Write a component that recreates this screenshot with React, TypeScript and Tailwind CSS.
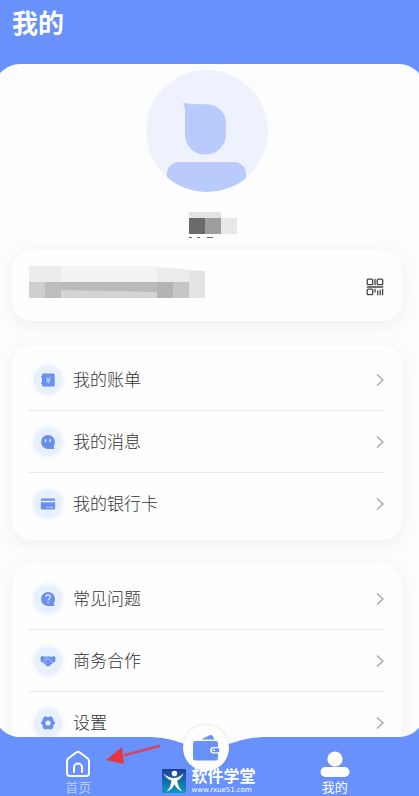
import React from 'react';

type IconProps = { className?: string };

const BillIcon: React.FC<IconProps> = ({ className }) => (
  <svg viewBox="0 0 16 16" className={className} fill="none">
    <path d="M4 1.5h9.500a1.200 1.200 0 0 1 1.200 1.200v10.600a1.200 1.200 0 0 1-1.200 1.200H3.200A1.200 1.200 0 0 1 2 13.300V12h-.8v-1.600H2V5.600h-.8V4H2V2.700a1.200 1.200 0 0 1 1.200-1.200Z" fill="#6990ee" />
    <path d="m6.300 4.800 2 2.700 2-2.700M6 7.700h4.600M6 9.400h4.600M8.300 7.500v4" stroke="#bdd2ff" strokeWidth="1" />
  </svg>
);

const MessageIcon: React.FC<IconProps> = ({ className }) => (
  <svg viewBox="0 0 16 16" className={className} fill="none">
    <path d="M8 1a7 7 0 0 1 7 7c0 1.700-.5 3-1.300 4.200l.6 2.800H8A7 7 0 0 1 8 1Z" fill="#6990ee" />
    <path d="M5.500 5.800v1.700M10.200 5.800v1.700" stroke="#dbe6ff" strokeWidth="1.500" strokeLinecap="round" />
    <path d="M5.500 10.300c1.400 1.200 3.500 1.200 5 0" stroke="#5580e4" strokeWidth="1" />
  </svg>
);

const CardIcon: React.FC<IconProps> = ({ className }) => (
  <svg viewBox="0 0 16 16" className={className} fill="none">
    <path d="M2 2.500h12c.7 0 1.200.5 1.200 1.200v1H.8v-1c0-.7.500-1.200 1.200-1.200ZM.8 6.300h14.400v6c0 .7-.5 1.200-1.200 1.200H2c-.7 0-1.200-.5-1.200-1.200v-6Z" fill="#6990ee" />
    <path d="M6.500 11.300h2M9.500 11.300h3.500" stroke="#c9d9ff" strokeWidth="1" />
  </svg>
);

const QuestionIcon: React.FC<IconProps> = ({ className }) => (
  <svg viewBox="0 0 16 16" className={className} fill="none">
    <path d="M8 1a7 7 0 0 1 7 7c0 1.700-.5 3-1.300 4.200l.9 2.800H8A7 7 0 0 1 8 1Z" fill="#6990ee" />
    <path d="M5.900 6c.1-1.300 1-2 2.200-2s2.200.8 2.200 2c0 1.600-2.200 1.700-2.200 3.500M8.100 10.800v1.400" stroke="#dbe6ff" strokeWidth="1.300" />
  </svg>
);

const HandshakeIcon: React.FC<IconProps> = ({ className }) => (
  <svg viewBox="0 0 16 16" className={className} fill="none">
    <path d="m.4 4.200 2.400-1.400 1.600 1.100 2.800-.7.900.4 1-.4 2.600.7 1.500-1.100 2.400 1.400-.4 4.600-1.800.6-3.800 3.400c-.9.800-2 .8-2.900.1L2.600 9.300.8 8.700.4 4.200Z" fill="#6990ee" />
    <path d="M8.200 3.600 5.400 6.200c.9.900 2.300.7 3.200-.3l4.500 3.600M3 8.500l1.600-1.300M4.600 10l1.500-1.400M6.300 11.300l1.200-1.100" stroke="#c9d9ff" strokeWidth=".8" />
  </svg>
);

const GearIcon: React.FC<IconProps> = ({ className }) => (
  <svg viewBox="0 0 16 16" className={className} fill="none">
    <path d="M5.400 1.800 8 2.700l2.600-.9 1.900 1.100.5 2.700L14.800 8 13 10.300l-.5 2.800-1.900 1.100-2.600-.9-2.600.9-1.900-1.100-.5-2.800L1.200 8 3 5.600l.5-2.700 1.900-1.100Z" fill="#6990ee" stroke="#6990ee" strokeWidth="1" strokeLinejoin="round" />
    <circle cx="8" cy="8" r="2.600" fill="#e4edff" />
  </svg>
);

const Chevron = () => (
  <svg viewBox="0 0 8 14" className="h-3.5 w-2" fill="none" stroke="#a3a3a3" strokeWidth="1.300">
    <path d="m1 1.500 6 5.500-6 5.500" />
  </svg>
);

const QrIcon = () => (
  <svg viewBox="0 0 18 18" className="size-[18px]" fill="none" stroke="#444" strokeWidth="1.300">
    <rect x="1.200" y="1.200" width="5.500" height="5.500" rx="1" />
    <rect x="11.200" y="1.200" width="5.500" height="5.500" rx="1" />
    <rect x="1.200" y="11.200" width="5.500" height="5.500" rx="1" />
    <path d="M9 .8v6.400M.8 9h16.400M9 10.800v3.800M11.700 12.500v4.700M14.200 11.700v5.500M16.600 10.800v6.400" />
  </svg>
);

const Avatar = () => (
  <svg viewBox="0 0 122 122" className="size-[122px]">
    <defs>
      <clipPath id="avatar-clip">
        <circle cx="61" cy="61" r="61" />
      </clipPath>
    </defs>
    <circle cx="61" cy="61" r="61" fill="#edf2fd" />
    <g clipPath="url(#avatar-clip)" fill="#b9cbfc">
      <path d="M37 32.500c5 1.500 12 1.700 21 1.700 14 0 22 7 22 20V64c0 12-9 20.500-20.500 20.500S39 76 39 64V42c0-4-.6-7-2-9.500Z" />
      <rect x="21" y="92" width="79" height="40" rx="12" />
    </g>
  </svg>
);

const MaskedName = () => (
  <svg viewBox="0 0 48 28" className="h-7 w-12" shapeRendering="crispEdges">
    <path fill="#e3e3e3" d="M0 0h32v6H0z" />
    <path fill="#6a6a6a" d="M0 6h16v16H0z" />
    <path fill="#9d9d9d" d="M16 6h16v16H16z" />
    <path fill="#e8e8e8" d="M32 6h16v16H32z" />
    <path fill="#666" d="M0 25h3v1H0zM8 25h3v1H8zM18 25h6v1h-6z" />
  </svg>
);

const MaskedNumber = () => (
  <svg viewBox="0 0 176 32" className="h-8 w-44">
    <path fill="#f3f3f3" d="M0 0h128v16H0z" />
    <path fill="#ececec" d="M0 0h32v16H0zM128 1l48 4v11h-48z" />
    <path fill="#e4e4e4" d="M160 5h16v27h-16z" />
    <path fill="#cfcfcf" d="M0 16h16v16H0z" />
    <path fill="#d4d4d4" d="M32 16h96v16H32z" />
    <path fill="#bababa" d="M32 16h96v10l-96-2z" />
    <path fill="#bdbdbd" d="M16 16h16v16H16z" />
    <path fill="#b4b4b4" d="M128 16h16v16h-16z" />
    <path fill="#c6c6c6" d="M144 16h16v16h-16z" />
  </svg>
);

const groups = [
  [
    { label: '我的账单', icon: BillIcon },
    { label: '我的消息', icon: MessageIcon },
    { label: '我的银行卡', icon: CardIcon },
  ],
  [
    { label: '常见问题', icon: QuestionIcon },
    { label: '商务合作', icon: HandshakeIcon },
    { label: '设置', icon: GearIcon },
  ],
];

const MenuCard: React.FC<{ items: (typeof groups)[number] }> = ({ items }) => (
  <ul className="divide-y divide-[#e9e9e9] rounded-[20px] bg-[#fefefe] pt-1 pr-[18px] pb-1.5 pl-[17px] shadow-[0_4px_14px_4px_rgba(0,0,0,0.04)]">
    {items.map(({ label, icon: Icon }) => (
      <li key={label}>
        <a href="#" className="flex h-[61px] items-center pl-[5px]">
          <span className="flex size-7 items-center justify-center rounded-full bg-[#e8f0fe] shadow-[0_0_4px_2px_#eef4fe]">
            <Icon className="size-4" />
          </span>
          <span className="ml-[11px] flex-1 pb-0.5 text-[17px] leading-6 font-light text-[#333]">{label}</span>
          <Chevron />
        </a>
      </li>
    ))}
  </ul>
);

const TabBar = () => (
  <nav className="relative grid h-[59px] shrink-0 grid-cols-3 pr-5 pl-3.5 text-[13px] leading-4 text-white">
    {/* Curved cradle under the wallet button */}
    <svg viewBox="0 0 120 20" className="absolute top-0 left-1/2 -ml-[63px] h-5 w-[120px]" fill="#fdfdfd">
      <path d="M0 0C20 0 28 4 38 7c4 8 40 8 44 0C92 4 100 0 120 0Z" />
    </svg>
    <a href="#" className="flex flex-col items-center pt-3 text-[#b7caff]">
      <svg viewBox="0 0 28 30" className="h-[30px] w-7" fill="none" stroke="#fff" strokeWidth="2" strokeLinejoin="round" strokeLinecap="round">
        <path d="M12.200 3.500a3 3 0 0 1 3.600 0l8 6a3 3 0 0 1 1.200 2.400V24a3 3 0 0 1-3 3H6a3 3 0 0 1-3-3V11.900a3 3 0 0 1 1.200-2.400l8-6Z" />
        <path d="M10 23v-4.500a4 4 0 0 1 8 0V23" />
      </svg>
      首页
    </a>
    <a href="#" aria-label="钱包" className="relative -mt-3 flex size-[46px] items-center justify-center justify-self-center rounded-full bg-[#fefefe] shadow-[0_0_3px_rgba(80,100,160,0.25)]">
      <svg viewBox="0 0 28 28" className="size-7" fill="#6891fb">
        <path d="M9 5.600 17.500 1.200c1.300-.6 2.600-.3 3.200.9L22.500 5.600Z" />
        <path d="M3.500 7h20A2.500 2.500 0 0 1 26 9.500V13h-4.500a3 3 0 0 0 0 6.500H26V24a2.500 2.500 0 0 1-2.500 2.500h-20A2.500 2.500 0 0 1 1 24V9.500A2.500 2.500 0 0 1 3.500 7Z" />
        <path d="M21.700 14.200h5.500v4.100h-5.500a2 2 0 0 1 0-4.100Z" />
        <circle cx="22" cy="16.200" r=".9" fill="#fff" />
      </svg>
    </a>
    <a href="#" className="flex flex-col items-center pt-3">
      <svg viewBox="0 0 30 30" className="size-[30px]" fill="#fff">
        <circle cx="15" cy="10" r="7.600" />
        <rect x=".5" y="18" width="29" height="10" rx="5" />
      </svg>
      我的
    </a>
  </nav>
);

const Watermark = () => (
  <div className="absolute bottom-0 left-1/2 -ml-12 flex items-center gap-1.5 text-white">
    <svg viewBox="0 0 26 26" className="size-6">
      <defs>
        <linearGradient id="mark" x1="0" y1="0" x2="0" y2="1">
          <stop offset="0" stopColor="#1d3f91" />
          <stop offset="1" stopColor="#0a9bc4" />
        </linearGradient>
      </defs>
      <rect width="26" height="26" rx="1.500" fill="url(#mark)" />
      <circle cx="13.500" cy="5" r="3" fill="#fff" />
      <path d="M1.500 4.500c3 3 6.500 5 10.500 5.200 4.500.1 8-1.700 11.500-5.200-1.700 4-4 6.500-7 8 .5 4.500 2.200 8.500 5.500 12-4.500-2-7-4.700-8.500-8-1.500 3.500-4.300 6.500-8.500 8 3.300-3.500 5-7.500 5.200-12C6.500 11 3.500 8.500 1.500 4.500Z" fill="#fff" />
    </svg>
    <div>
      <div className="text-[16px] leading-[18px] font-bold">软件学堂</div>
      <div className="font-['DejaVu_Sans',sans-serif] text-[7px] leading-3">www.rxue51.com</div>
    </div>
  </div>
);

const App: React.FC = () => {
  return (
    <div className="relative flex h-screen flex-col overflow-hidden bg-[#6891fb] font-['Noto_Sans_CJK_SC',sans-serif]">
      <header className="h-16 shrink-0 px-3 pt-1">
        <h1 className="text-[26px] leading-9 font-bold text-white">我的</h1>
      </header>

      <main className="-mx-1.5 min-h-0 flex-1 overflow-hidden rounded-[26px] bg-[#fdfdfd] pr-[23px] pl-[18px]">
        <section className="flex flex-col items-center pt-1.5">
          <Avatar />
          <div className="mt-5 ml-3">
            <MaskedName />
          </div>
        </section>

        <section className="mt-2.5 flex h-[71px] items-start justify-between rounded-[20px] bg-[#fefefe] pt-4 pr-[18px] pl-[17px] shadow-[0_4px_14px_4px_rgba(0,0,0,0.04)]">
          <MaskedNumber />
          <button type="button" aria-label="二维码" className="pt-3">
            <QrIcon />
          </button>
        </section>

        <div className="mt-6 flex flex-col gap-6">
          {groups.map((items) => (
            <MenuCard key={items[0].label} items={items} />
          ))}
        </div>
      </main>

      <TabBar />
      <Watermark />

      {/* Pointer towards the home tab */}
      <svg viewBox="0 0 56 26" className="absolute bottom-7 left-[105px] h-[26px] w-14">
        <path d="M54 4 20 13" stroke="#d8435f" strokeWidth="2.500" strokeLinecap="round" />
        <path d="M1 18 17 5l2 17Z" fill="#e8363f" />
      </svg>
    </div>
  );
};

export default App;
